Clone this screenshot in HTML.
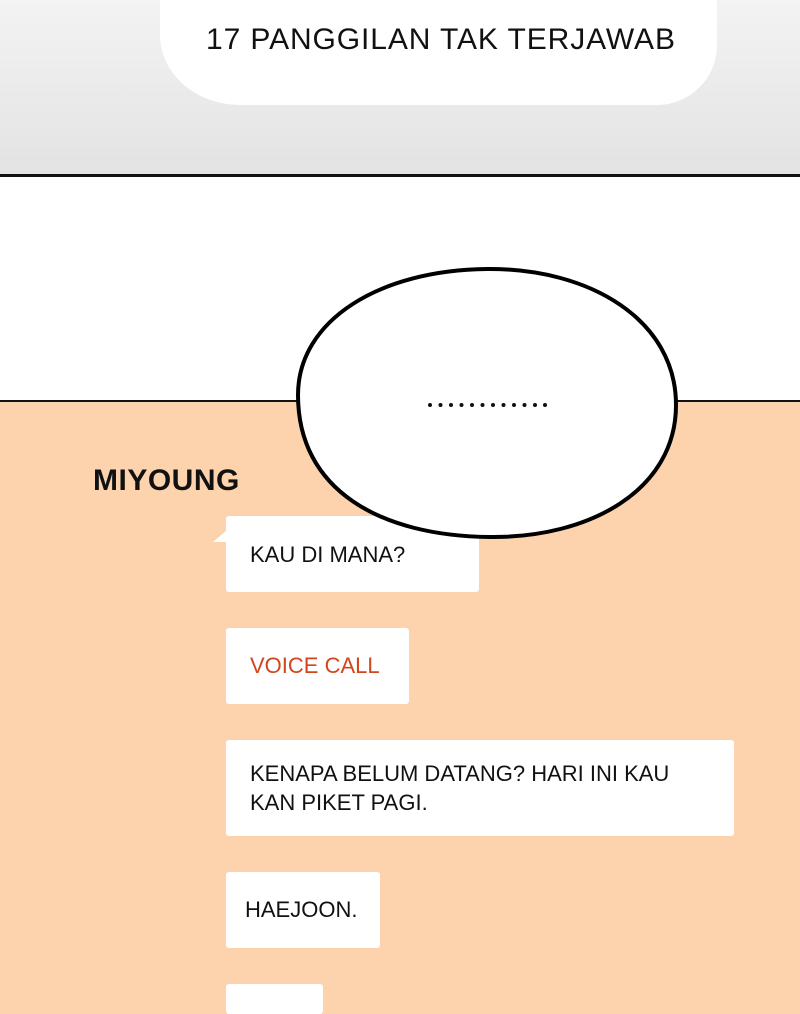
<!DOCTYPE html>
<html><head><style>
body{margin:0;width:800px;height:1000px;overflow:hidden;position:relative;font-family:"Liberation Sans",sans-serif;background:#fdd3ae}
.top{position:absolute;left:0;top:0;width:800px;height:174px;background:linear-gradient(#f3f3f3,#e3e3e3)}
.l1{position:absolute;left:0;top:174px;width:800px;height:3px;background:#111}
.white{position:absolute;left:0;top:177px;width:800px;height:224px;background:#fff}
.l2{position:absolute;left:0;top:400px;width:800px;height:2px;background:#111}
.tb{position:absolute;left:160px;top:-20px;width:557px;height:125px;background:#fff;border-radius:0 0 60px 80px / 0 0 60px 70px}
.tt{position:absolute;left:206px;top:23px;font-size:30px;color:#111;white-space:nowrap;letter-spacing:0.9px}
.name{position:absolute;left:93px;top:464px;font-size:30px;font-weight:bold;color:#111;letter-spacing:0.5px}
.m{position:absolute;left:226px;background:#fff;border-radius:3px;font-size:22px;color:#111;box-sizing:border-box;padding-left:24px;line-height:29px;white-space:nowrap}
</style></head><body>
<div class="top"></div>
<div class="tb"></div>
<div class="tt">17 PANGGILAN TAK TERJAWAB</div>
<div class="l1"></div>
<div class="white"></div>
<div class="l2"></div>
<div class="name">MIYOUNG</div>
<div class="m" style="top:516px;width:253px;height:76px;padding-top:24px">KAU DI MANA?</div>
<div style="position:absolute;left:213px;top:530px;width:0;height:0;border-top:12px solid transparent;border-right:14px solid #fff"></div>
<div class="m" style="top:628px;width:183px;height:76px;padding-top:23px;color:#d2461e">VOICE CALL</div>
<div class="m" style="top:740px;width:508px;height:96px;padding-top:19px">KENAPA BELUM DATANG? HARI INI KAU<br>KAN PIKET PAGI.</div>
<div class="m" style="top:872px;width:154px;height:76px;padding-left:19px;padding-top:23px">HAEJOON.</div>
<div class="m" style="top:984px;width:97px;height:30px"></div>
<svg style="position:absolute;left:0;top:0" width="800" height="1000">
<path d="M487 269 C590 268 676 320 676 405 C676 490 590 538 490 537 C380 536 298 490 298 395 C298 320 380 270 487 269 Z" fill="#fff" stroke="#000" stroke-width="4"/>
<g fill="#111">
<circle cx="430" cy="405" r="2"/><circle cx="440.5" cy="405" r="2"/><circle cx="451" cy="405" r="2"/><circle cx="461.5" cy="405" r="2"/><circle cx="472" cy="405" r="2"/><circle cx="482.5" cy="405" r="2"/><circle cx="493" cy="405" r="2"/><circle cx="503.5" cy="405" r="2"/><circle cx="514" cy="405" r="2"/><circle cx="524.5" cy="405" r="2"/><circle cx="535" cy="405" r="2"/><circle cx="545" cy="405" r="2"/>
</g>
</svg>
</body></html>
